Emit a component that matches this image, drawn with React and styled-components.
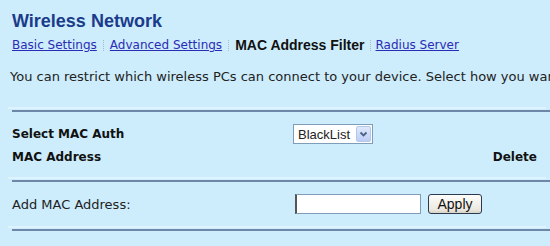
import React from "react";
import styled, { createGlobalStyle } from "styled-components";

const GlobalStyle = createGlobalStyle`
  html, body {
    margin: 0;
    padding: 0;
    background: #cdedfc;
    overflow: hidden;
  }
  body {
    font-family: "DejaVu Sans", Verdana, sans-serif;
    font-size: 12px;
    color: #1e1e1e;
  }
`;

const Page = styled.div`
  width: 550px;
  height: 246px;
  overflow: hidden;
  background: #cdedfc;
`;

const Header = styled.div`
  padding: 10px 12px 0;
`;

const Title = styled.h1`
  margin: 0;
  font-family: "Liberation Sans", Arial, sans-serif;
  font-size: 18px;
  line-height: 22px;
  font-weight: bold;
  color: #1b3b8b;
`;

const Tabs = styled.div`
  display: flex;
  align-items: center;
  margin-top: 5px;
  height: 16px;
  white-space: nowrap;
`;

const TabLink = styled.a`
  font-size: 12px;
  color: #2b2bb5;
  text-decoration: underline;
  cursor: pointer;
`;

const TabCurrent = styled.span`
  font-family: "Liberation Sans", Arial, sans-serif;
  font-size: 14px;
  font-weight: bold;
  color: #111;
`;

const Sep = styled.span`
  display: inline-block;
  width: 0;
  height: 11px;
  border-left: 1px dotted #a9b8c4;
  margin: 0 ${(p) => p.$gap || 6}px;
`;

const Intro = styled.p`
  margin: 16px 0 0;
  padding-left: 10px;
  font-size: 13px;
  line-height: 16px;
  white-space: nowrap;
  overflow: hidden;
  color: #222;
`;

const Divider = styled.div`
  margin: ${(p) => p.$top || 0}px 0 0 12px;
  height: 2px;
  background: #6f87a7;
  box-shadow: -4px -3px 0 0 rgba(255, 255, 255, 0.35);
`;

const Grid = styled.div`
  display: grid;
  grid-template-columns: 281px 1fr auto;
  padding: ${(p) => p.$pad || "0"};
  padding-left: 12px;
  padding-right: 13px;
  align-items: center;
`;

const Row = styled.div`
  display: contents;
`;

const Cell = styled.div`
  height: ${(p) => p.$h || 22}px;
  display: flex;
  align-items: center;
  justify-content: ${(p) => (p.$right ? "flex-end" : "flex-start")};
  font-size: ${(p) => (p.$bold ? 12 : 13)}px;
  font-weight: ${(p) => (p.$bold ? "bold" : "normal")};
  color: ${(p) => (p.$bold ? "#111" : "#222")};
  white-space: nowrap;
`;

const SelectWrap = styled.div`
  position: relative;
  width: 80px;
  height: 20px;
`;

const Select = styled.select`
  appearance: none;
  width: 100%;
  height: 100%;
  margin: 0;
  padding: 0 0 0 4px;
  border: 1px solid #7f9db9;
  background: #fff;
  font-family: "Liberation Sans", Arial, sans-serif;
  font-size: 13px;
  color: #222;
  outline: none;
`;

const Arrow = styled.span`
  position: absolute;
  right: 2px;
  top: 2px;
  width: 15px;
  height: 16px;
  box-sizing: border-box;
  border: 1px solid #b6c8ea;
  border-radius: 2px;
  background: linear-gradient(#dfe9fd, #bccdf5);
  display: flex;
  align-items: center;
  justify-content: center;
  pointer-events: none;
`;

const TextInput = styled.input`
  box-sizing: border-box;
  width: 126px;
  height: 20px;
  margin: 0 7px 0 2px;
  padding: 0 3px;
  border: 1px solid #7f9db9;
  border-left: 2px solid #555;
  background: #fff;
  outline: none;
`;

const Button = styled.button`
  box-sizing: border-box;
  width: 54px;
  height: 20px;
  padding: 0;
  border: 1px solid #2c3a4f;
  border-radius: 3px;
  background: linear-gradient(#fdfdfb, #ece9e0 80%, #d6d3c8);
  font-family: "Liberation Sans", Arial, sans-serif;
  font-size: 14px;
  color: #111;
`;

export default function App() {
  return (
    <Page>
      <GlobalStyle />
      <Header>
        <Title>Wireless Network</Title>
        <Tabs>
          <TabLink>Basic Settings</TabLink>
          <Sep />
          <TabLink>Advanced Settings</TabLink>
          <Sep />
          <TabCurrent>MAC Address Filter</TabCurrent>
          <Sep $gap={5} />
          <TabLink>Radius Server</TabLink>
        </Tabs>
      </Header>
      <Intro>
        You can restrict which wireless PCs can connect to your device. Select how you want to control access.
      </Intro>
      <Divider $top={25} />
      <Grid $pad="10px 0 12px">
        <Row>
          <Cell $bold $h={24}>Select MAC Auth</Cell>
          <Cell $h={24}>
            <SelectWrap>
              <Select defaultValue="BlackList">
                <option>BlackList</option>
                <option>WhiteList</option>
              </Select>
              <Arrow>
                <svg width="9" height="7" viewBox="0 0 9 7">
                  <path d="M1.5 1.5 L4.5 4.5 L7.5 1.5" fill="none" stroke="#4d6185" strokeWidth="1.8" />
                </svg>
              </Arrow>
            </SelectWrap>
          </Cell>
          <Cell $h={24} />
        </Row>
        <Row>
          <Cell $bold>MAC Address</Cell>
          <Cell />
          <Cell $bold $right>Delete</Cell>
        </Row>
      </Grid>
      <Divider />
      <Grid $pad="12px 0 15px">
        <Row>
          <Cell $h={20}>Add MAC Address:</Cell>
          <Cell $h={20}>
            <TextInput type="text" />
            <Button>Apply</Button>
          </Cell>
          <Cell $h={20} />
        </Row>
      </Grid>
      <Divider />
    </Page>
  );
}
